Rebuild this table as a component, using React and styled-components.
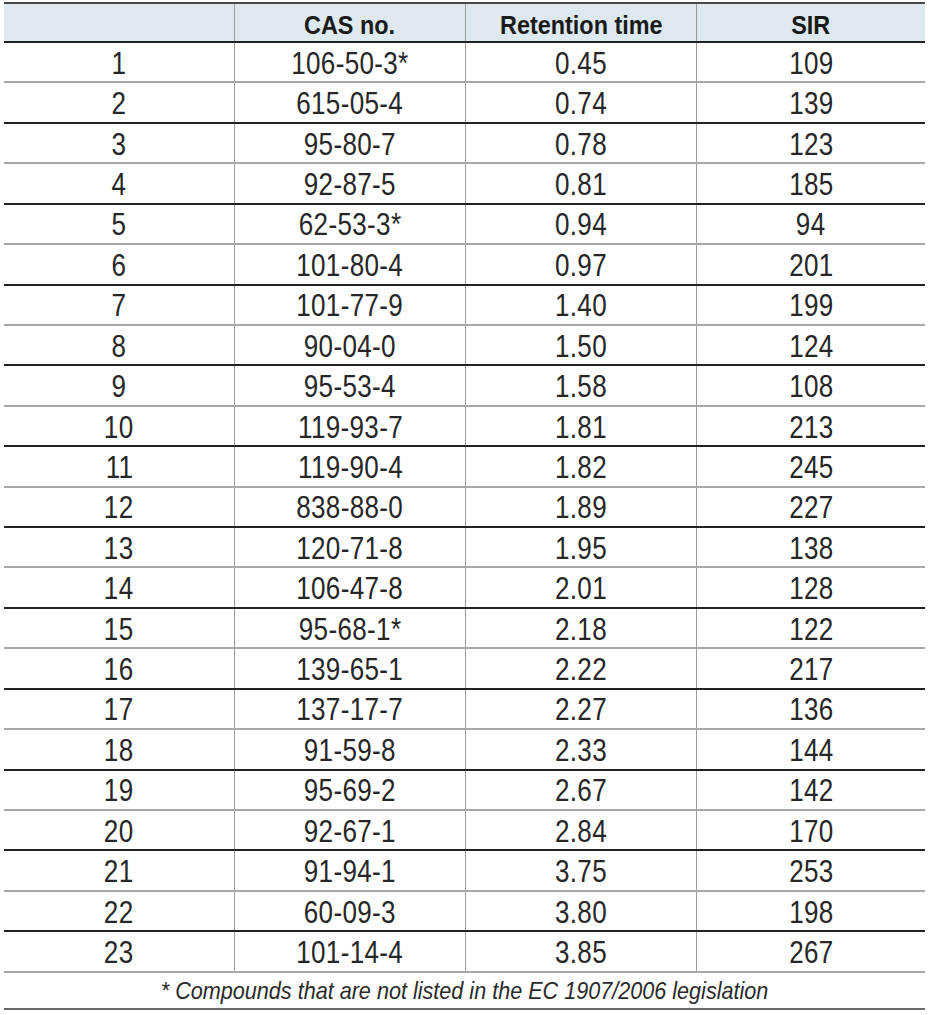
import React from "react"
import styled, { createGlobalStyle } from "styled-components"

const rows = [
  ["1", "106-50-3*", "0.45", "109"],
  ["2", "615-05-4", "0.74", "139"],
  ["3", "95-80-7", "0.78", "123"],
  ["4", "92-87-5", "0.81", "185"],
  ["5", "62-53-3*", "0.94", "94"],
  ["6", "101-80-4", "0.97", "201"],
  ["7", "101-77-9", "1.40", "199"],
  ["8", "90-04-0", "1.50", "124"],
  ["9", "95-53-4", "1.58", "108"],
  ["10", "119-93-7", "1.81", "213"],
  ["11", "119-90-4", "1.82", "245"],
  ["12", "838-88-0", "1.89", "227"],
  ["13", "120-71-8", "1.95", "138"],
  ["14", "106-47-8", "2.01", "128"],
  ["15", "95-68-1*", "2.18", "122"],
  ["16", "139-65-1", "2.22", "217"],
  ["17", "137-17-7", "2.27", "136"],
  ["18", "91-59-8", "2.33", "144"],
  ["19", "95-69-2", "2.67", "142"],
  ["20", "92-67-1", "2.84", "170"],
  ["21", "91-94-1", "3.75", "253"],
  ["22", "60-09-3", "3.80", "198"],
  ["23", "101-14-4", "3.85", "267"],
]

const GlobalStyle = createGlobalStyle`
  body {
    margin: 0;
    background: #fff;
    font-family: "Liberation Sans", Arial, sans-serif;
    color: #1e1e1e;
  }
`

const Table = styled.div`
  width: 921px;
  margin: 2px 0 0 4px;
`

const Row = styled.div`
  display: grid;
  grid-template-columns: 230px 231px 231px 229px;
  box-sizing: border-box;
  height: ${(p) => (p.$head ? "41px" : "40.43px")};
  background: ${(p) => (p.$head ? "#dde9ef" : "transparent")};
  border-top: ${(p) => (p.$head ? "2px solid #4a4a4a" : "none")};
  border-bottom: ${(p) => (p.$dark ? "2px solid #222" : "2px solid #a8a8a8")};
`

const Cell = styled.div`
  display: flex;
  align-items: center;
  justify-content: center;
  border-left: ${(p) => (p.$first ? "none" : "1.5px solid #9c9c9c")};
  padding-top: ${(p) => (p.$head ? "5px" : "2px")};
`

// the source face is a narrow one, so the wide sans is squeezed to fit
const Text = styled.span`
  display: inline-block;
  white-space: nowrap;
  line-height: 1;
  font-size: ${(p) => (p.$head ? "26px" : "31px")};
  font-weight: ${(p) => (p.$head ? 700 : 400)};
  color: ${(p) => (p.$head ? "#1a1a1a" : "#262626")};
  letter-spacing: ${(p) => (p.$head ? "0" : "0.4px")};
  transform: scaleX(${(p) => (p.$head ? 0.9 : 0.84)});
`

const Note = styled.div`
  box-sizing: border-box;
  height: 37px;
  display: flex;
  align-items: center;
  justify-content: center;
  border-bottom: 2px solid #6a6a6a;
  padding-top: 2px;

  span {
    display: inline-block;
    white-space: nowrap;
    font-size: 24px;
    font-style: italic;
    color: #2a2a2a;
    transform: scaleX(0.9);
  }
`

const App = () => {
  return (
    <>
      <GlobalStyle />
      <Table>
        <Row $head $dark>
          <Cell $head $first></Cell>
          <Cell $head><Text $head>CAS no.</Text></Cell>
          <Cell $head><Text $head>Retention time</Text></Cell>
          <Cell $head><Text $head>SIR</Text></Cell>
        </Row>
        {rows.map((r, i) => (
          <Row key={r[0]} $dark={i % 2 === 1}>
            {r.map((v, j) => (
              <Cell key={j} $first={j === 0}>
                <Text>{v}</Text>
              </Cell>
            ))}
          </Row>
        ))}
        <Note>
          <span>* Compounds that are not listed in the EC 1907/2006 legislation</span>
        </Note>
      </Table>
    </>
  )
}

export default App
